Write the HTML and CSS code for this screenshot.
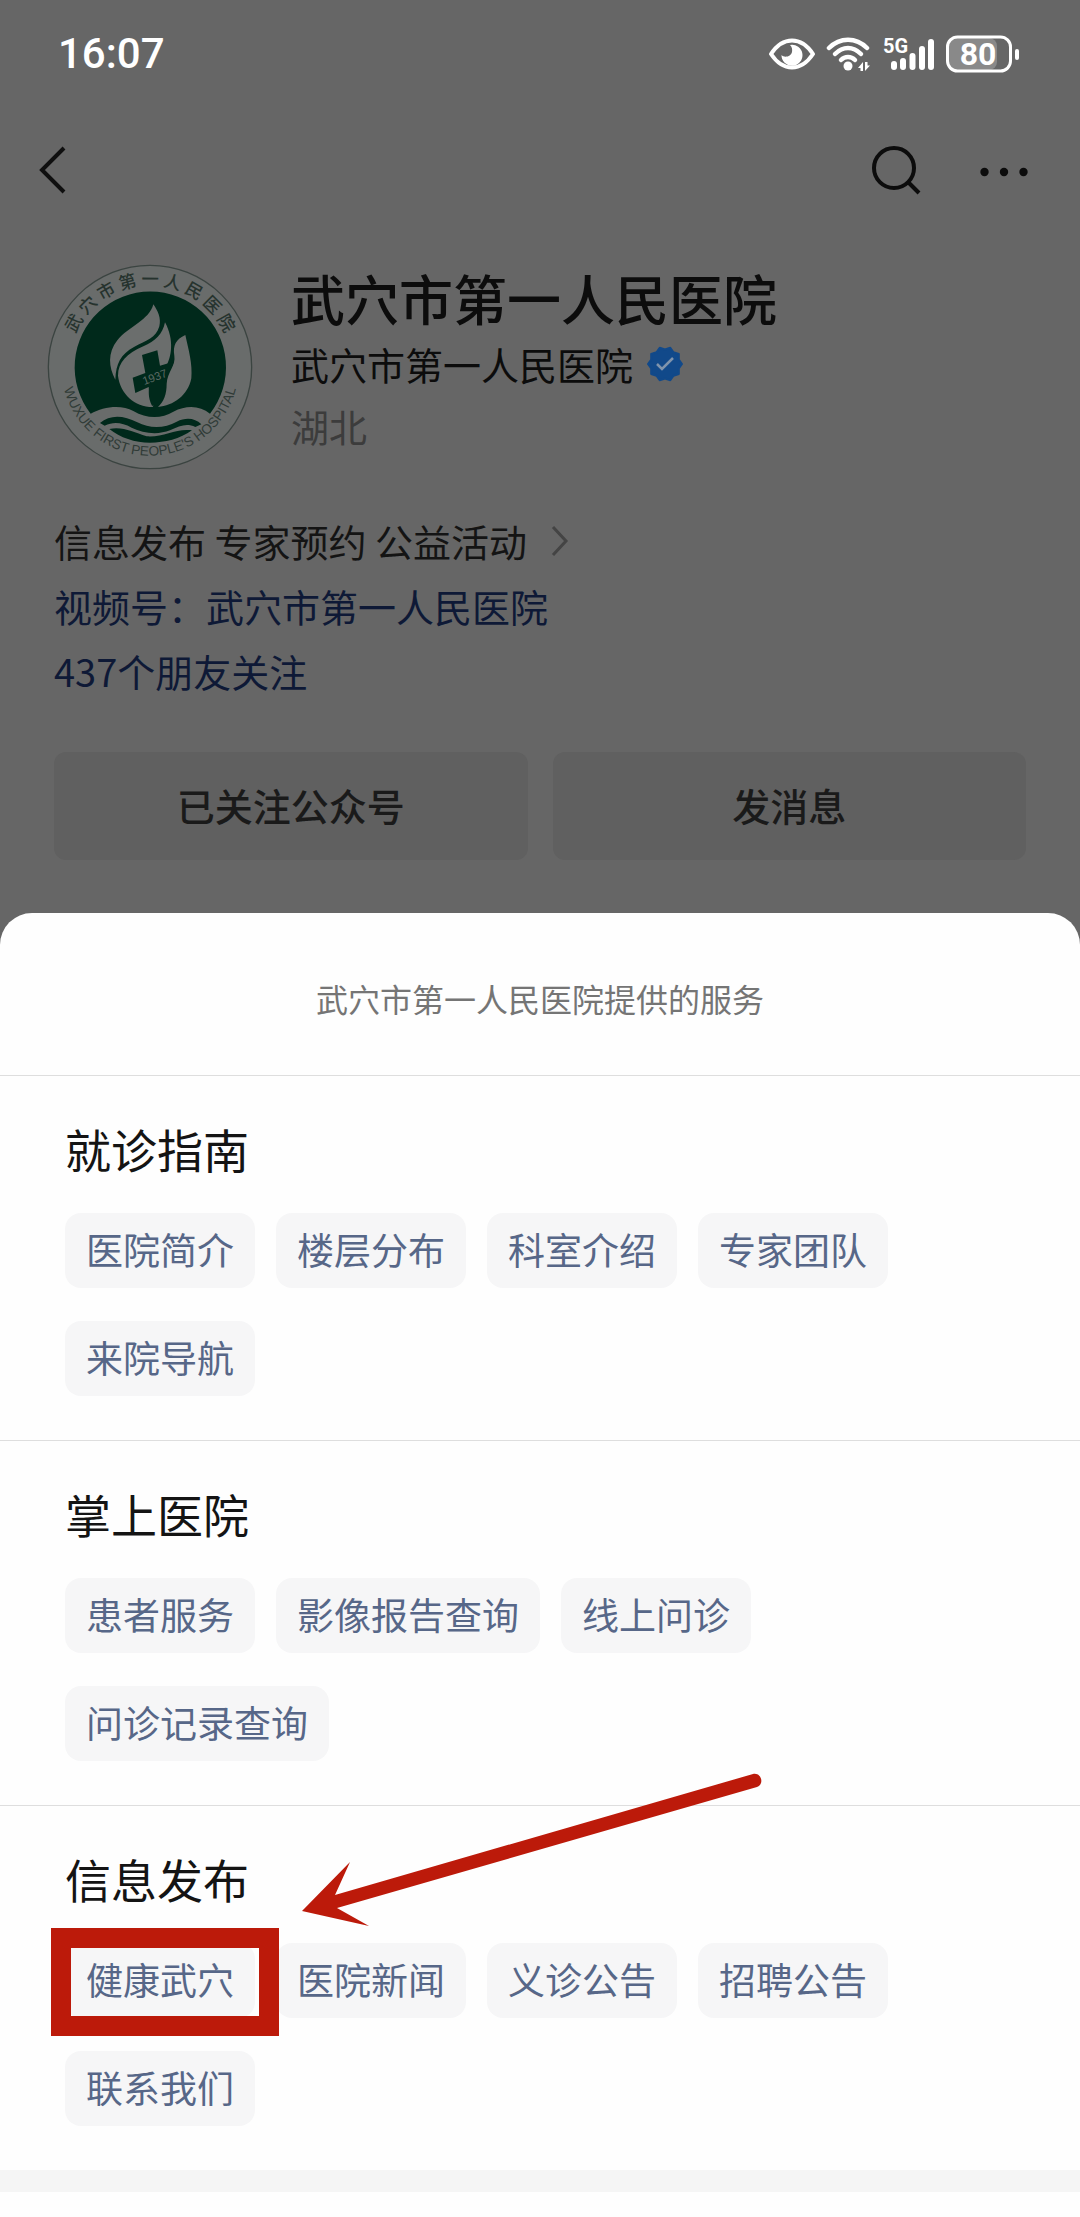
FILE: index.html
```html
<!DOCTYPE html>
<html lang="zh-CN">
<head>
<meta charset="utf-8">
<meta name="viewport" content="width=device-width, initial-scale=1">
<title>武穴市第一人民医院</title>
<link rel="stylesheet" href="styles.css">
</head>
<body>
<div class="status">
  <time class="clock">16:07</time>
  <div class="indicators">
    <svg class="eye" width="46" height="32" viewBox="0 0 46 32" aria-hidden="true">
      <path d="M2 16C14-2 32-2 44 16C32 34 14 34 2 16Z" fill="none" stroke="#fff" stroke-width="4" stroke-linejoin="round"/>
      <path d="M21 7A10.500 10.500 0 1 1 12.500 17C15 20 22 19 23 14C23.500 11 23 9 21 7Z" fill="#fff"/>
    </svg>
    <svg class="wifi" width="46" height="36" viewBox="0 0 46 36" aria-hidden="true">
      <g fill="none" stroke="#fff" stroke-width="4.500" stroke-linecap="round">
        <path d="M3 12C14 1 30 1 41 12"/>
        <path d="M9 18C17 10 27 10 35 18"/>
        <path d="M15 24C19 20 25 20 29 24"/>
      </g>
      <circle cx="22" cy="30" r="4.500" fill="#fff"/>
      <path d="M37 26V35H34.500V32H32L37 26ZM39 26V35L44 29.500H41.500V26Z" fill="#fff"/>
    </svg>
    <svg class="signal" width="52" height="48" viewBox="0 -6 52 48" aria-hidden="true">
      <text class="net" x="0" y="17">5G</text>
      <g stroke="#fff" stroke-width="6" stroke-linecap="round">
        <path d="M11 28V31"/><path d="M20 25V31"/><path d="M29.500 20V31"/><path d="M39 13V31"/><path d="M48 6V31"/>
      </g>
    </svg>
    <svg class="battery" width="74" height="38" viewBox="0 0 74 38">
      <rect x="2" y="3" width="49" height="32" rx="8" fill="#898989"/>
      <rect x="1.500" y="2" width="63" height="34" rx="10" fill="none" stroke="#fff" stroke-width="3"/>
      <rect x="69" y="14" width="4" height="11" rx="2" fill="#fff"/>
      <text class="level" x="32" y="30">80</text>
    </svg>
  </div>
</div>

<nav class="nav">
  <button class="icon-button" aria-label="返回">
    <svg width="28" height="48" viewBox="0 0 28 48"><path d="M25 2L3 24L25 46" fill="none" stroke="#0f0f0f" stroke-width="4"/></svg>
  </button>
  <div class="nav-actions">
    <button class="icon-button" aria-label="搜索">
      <svg width="50" height="50" viewBox="0 0 50 50"><g fill="none" stroke="#0c0c0c" stroke-width="4"><circle cx="23" cy="23" r="20"/><path d="M37 37L48 48"/></g></svg>
    </button>
    <button class="icon-button" aria-label="更多">
      <svg width="48" height="50" viewBox="0 0 48 50"><g fill="#0c0c0c"><circle cx="4.500" cy="27" r="4.200"/><circle cx="24" cy="27" r="4.200"/><circle cx="43.500" cy="27" r="4.200"/></g></svg>
    </button>
  </div>
</nav>

<header class="profile">
  <svg class="logo" viewBox="48 38 624 624">
    <defs>
      <path id="arc-top" d="M115 350A245 245 0 0 1 605 350"/>
      <path id="arc-bottom" d="M94 350A266 266 0 0 0 626 350"/>
    </defs>
    <circle cx="360" cy="350" r="305" fill="#696c6b" stroke="#3b4441" stroke-width="4"/>
    <path d="M182 490A227 227 0 1 1 540 490C510 466 470 464 430 484C395 506 350 506 310 482C275 462 220 468 182 490Z" fill="#00291b"/>
    <path d="M210 518C240 492 280 494 322 516C360 536 405 534 440 514C470 500 495 504 514 522L496 530C470 518 450 526 420 540C385 554 340 550 305 532C275 516 250 514 224 526Z" fill="#00291b"/>
    <path d="M238 536C280 528 310 546 350 558C400 562 440 532 486 540C450 566 405 577 360 577C315 577 270 562 238 536Z" fill="#00291b"/>
    <g fill="#6b6e6d">
      <path d="M370 162C358 210 296 228 262 270C232 308 236 350 256 388C258 340 272 312 312 290C350 270 378 264 388 228C394 204 384 182 370 162Z"/>
      <path d="M405 216C398 252 376 272 340 288C290 310 264 336 264 376C270 430 314 470 368 470C390 440 404 400 408 350C424 320 434 270 405 216Z"/>
      <path d="M466 254C438 266 428 286 433 316C438 346 412 364 410 400C410 432 402 452 384 470C430 466 474 436 484 384C488 340 476 300 466 254Z"/>
    </g>
    <path d="M336 314L382 300L390 346L430 334C430 350 414 362 410 380L402 392C412 410 404 446 384 466L366 466C352 440 358 420 356 410L316 428L308 382L346 368Z" fill="#00291b"/>
    <text class="logo-year" x="374" y="392" transform="rotate(-20 374 380)">1937</text>
    <text class="logo-cn" x="128 192 257 321 385 449 513 577 641"><textPath href="#arc-top">武穴市第一人民医院</textPath></text>
    <text class="logo-en"><textPath href="#arc-bottom" startOffset="50%">WUXUE FIRST PEOPLE'S HOSPITAL</textPath></text>
  </svg>
  <div class="identity">
    <h1 class="name">武穴市第一人民医院</h1>
    <div class="owner">
      <span>武穴市第一人民医院</span>
      <svg width="36" height="36" viewBox="-18 -18 36 36" aria-hidden="true">
        <path d="M0-14.500L5.300-16.200L8.500-11.700L13.800-10L13.800-4.500L17 0L13.800 4.500L13.800 10L8.500 11.700L5.300 16.200L0 14.500L-5.300 16.200L-8.500 11.700L-13.800 10L-13.800 4.500L-17 0L-13.800-4.500L-13.800-10L-8.500-11.700L-5.300-16.200Z" fill="#11498a" stroke="#11498a" stroke-width="2" stroke-linejoin="round"/>
        <path d="M-8 0L-3 5L8-6" fill="none" stroke="#7f94ac" stroke-width="2.500"/>
      </svg>
    </div>
    <div class="region">湖北</div>
  </div>
</header>

<div class="details">
  <div class="summary">
    <span>信息发布 专家预约 公益活动</span>
    <svg width="18" height="32" viewBox="0 0 18 32" aria-hidden="true"><path d="M2 2L15 16L2 30" fill="none" stroke="#444" stroke-width="3"/></svg>
  </div>
  <a class="detail-link" href="#channel">视频号：武穴市第一人民医院</a>
  <a class="detail-link" href="#friends">437个朋友关注</a>
</div>

<div class="actions">
  <button class="action">已关注公众号</button>
  <button class="action">发消息</button>
</div>

<main class="sheet">
  <p class="sheet-title">武穴市第一人民医院提供的服务</p>

  <section class="group">
    <h2 class="group-title">就诊指南</h2>
    <div class="chips">
      <button class="chip">医院简介</button>
      <button class="chip">楼层分布</button>
      <button class="chip">科室介绍</button>
      <button class="chip">专家团队</button>
      <button class="chip">来院导航</button>
    </div>
  </section>

  <section class="group">
    <h2 class="group-title">掌上医院</h2>
    <div class="chips">
      <button class="chip">患者服务</button>
      <button class="chip">影像报告查询</button>
      <button class="chip">线上问诊</button>
      <button class="chip">问诊记录查询</button>
    </div>
  </section>

  <section class="group">
    <h2 class="group-title">信息发布</h2>
    <div class="chips">
      <button class="chip chip-marked">健康武穴</button>
      <button class="chip">医院新闻</button>
      <button class="chip">义诊公告</button>
      <button class="chip">招聘公告</button>
      <button class="chip">联系我们</button>
    </div>
    <svg class="arrow" width="460" height="156" viewBox="0 0 460 156" aria-hidden="true">
      <path d="M0 138L48 89L33 122L451 1C459-1 463 11 455 14L35 135L67 153Z" fill="#bc1a0a"/>
    </svg>
  </section>

  <div class="divider"></div>
</main>
</body>
</html>
```
FILE: styles.css
```css
* {
  box-sizing: border-box;
}

body {
  margin: 0;
  min-height: 100vh;
  display: flex;
  flex-direction: column;
  background: #666;
  color: #0c0c0c;
  font-family: "Noto Sans CJK SC", sans-serif;
}

button {
  margin: 0;
  padding: 0;
  border: 0;
  background: none;
  color: inherit;
  font: inherit;
}

svg {
  display: block;
  flex: none;
}

h1,
h2,
p {
  margin: 0;
}

/* Status bar */
.status {
  display: flex;
  align-items: center;
  justify-content: space-between;
  height: 108px;
  padding: 0 60px 0 58px;
}

.clock {
  color: #fff;
  font: 500 42px/60px Roboto, sans-serif;
}

.indicators {
  display: flex;
  align-items: center;
  gap: 11px;
}

.net {
  fill: #fff;
  font: 700 20px Roboto, sans-serif;
}

.level {
  fill: #fff;
  font: 700 32px Roboto, sans-serif;
  text-anchor: middle;
}

/* Navigation */
.nav {
  display: flex;
  align-items: center;
  justify-content: space-between;
  height: 124px;
  padding: 0 52px 0 39px;
}

.nav-actions {
  display: flex;
  gap: 59px;
}

/* Account */
.profile {
  display: flex;
  gap: 37px;
  padding: 31px 46px 0;
}

.logo {
  width: 208px;
  height: 208px;
}

.logo-year {
  fill: #5d6b65;
  font: 34px "Liberation Sans", sans-serif;
  text-anchor: middle;
}

.logo-cn {
  fill: #26332e;
  font: 500 52px "Noto Sans CJK SC", sans-serif;
  text-anchor: middle;
}

.logo-en {
  fill: #303b37;
  font: 41px "Liberation Sans", sans-serif;
  text-anchor: middle;
}

.name {
  font-size: 54px;
  font-weight: 500;
  line-height: 70px;
}

.owner {
  display: flex;
  align-items: center;
  gap: 14px;
  font-size: 38px;
  line-height: 62px;
}

.region {
  color: #3c3c3c;
  font-size: 38px;
  line-height: 62px;
}

.details {
  display: flex;
  flex-direction: column;
  align-items: flex-start;
  padding: 37px 54px 0;
  font-size: 38px;
  line-height: 65px;
}

.summary {
  display: flex;
  align-items: center;
  gap: 24px;
  color: #141414;
}

.detail-link {
  color: #0e1936;
  text-decoration: none;
}

.actions {
  display: flex;
  gap: 25px;
  padding: 49px 54px 53px;
}

.action {
  flex: 1;
  height: 108px;
  padding-bottom: 4px;
  border-radius: 12px;
  background: #606060;
  color: #1a1a1a;
  font-size: 38px;
  font-weight: 500;
}

/* Services sheet */
.sheet {
  flex: 1;
  border-radius: 32px 32px 0 0;
  background: #fefefe;
}

.sheet-title {
  padding: 61px 24px 53px;
  color: #757575;
  font-size: 32px;
  line-height: 48px;
  text-align: center;
}

.group {
  position: relative;
  padding: 42px 65px 44px;
  border-top: 1px solid #dedede;
}

.group-title {
  margin-bottom: 35px;
  color: #141414;
  font-size: 46px;
  font-weight: 400;
  line-height: 60px;
}

.chips {
  display: flex;
  flex-wrap: wrap;
  gap: 33px 21px;
}

.chip {
  position: relative;
  height: 75px;
  padding: 0 21px 4px;
  border-radius: 16px;
  background: #f6f6f7;
  color: #576788;
  font-size: 37px;
}

/* Red frame around the highlighted service */
.chip-marked::after {
  content: "";
  position: absolute;
  z-index: 1;
  inset: -15px -24px -18px -14px;
  border: 20px solid #bc1a0a;
}

.arrow {
  position: absolute;
  top: -33px;
  left: 302px;
}

.divider {
  height: 22px;
  background: #f5f5f5;
}
```
